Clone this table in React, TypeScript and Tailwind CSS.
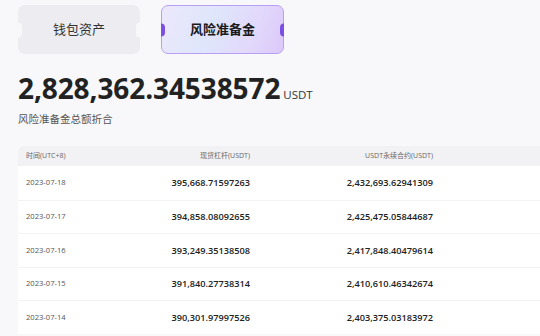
import React from "react";

const rows = [
  ["2023-07-18", "395,668.71597263", "2,432,693.62941309"],
  ["2023-07-17", "394,858.08092655", "2,425,475.05844687"],
  ["2023-07-16", "393,249.35138508", "2,417,848.40479614"],
  ["2023-07-15", "391,840.27738314", "2,410,610.46342674"],
  ["2023-07-14", "390,301.97997526", "2,403,375.03183972"],
];

const font = { fontFamily: '"Open Sans", "Noto Sans CJK SC", sans-serif' };

export default function App() {
  return (
    <div
      className="w-[540px] h-[336px] overflow-hidden bg-[#f8f8fb] relative"
      style={font}
    >
      <div className="flex gap-[21px] pl-[18px] pt-[5px]">
        <div className="relative w-[122px] h-[49px] rounded-[7px] bg-[#ededf1] flex items-center justify-center text-[13px] text-[#333]">
          <div className="absolute left-0 top-1/2 -translate-y-1/2 w-[4px] h-[15px] rounded-r-full bg-[#f8f8fb]" />
          <div className="absolute right-0 top-1/2 -translate-y-1/2 w-[4px] h-[15px] rounded-l-full bg-[#f8f8fb]" />
          钱包资产
        </div>
        <div className="relative w-[123px] h-[49px] rounded-[7px] border border-[#b7a0f2] bg-[linear-gradient(110deg,#ece8fb_0%,#dfe6fb_40%,#e2d8fb_75%,#dcc8fa_100%)] flex items-center justify-center text-[13px] font-bold text-[#1a1a1a]">
          <div className="absolute left-[-1px] top-1/2 -translate-y-1/2 w-[4px] h-[13px] rounded-r-full bg-[#7c4fe3]" />
          <div className="absolute right-[-1px] top-1/2 -translate-y-1/2 w-[4px] h-[13px] rounded-l-full bg-[#7c4fe3]" />
          风险准备金
        </div>
      </div>

      <div className="pl-[18px] mt-[18px] flex items-baseline">
        <span className="text-[28px] font-bold text-[#222] leading-[32px] tracking-[-0.1px]">
          2,828,362.34538572
        </span>
        <span className="ml-[3px] text-[11.5px] text-[#333]">USDT</span>
      </div>
      <div className="pl-[18px] mt-[8px] text-[10.5px] text-[#555] leading-[14px]">
        风险准备金总额折合
      </div>

      <div className="ml-[18px] mt-[20px] w-[600px]">
        <div className="h-[20px] rounded-t-[6px] bg-[#f2f2f5] flex items-center pl-[8px] text-[7px] text-[#666]">
          <div className="w-[120px]">时间(UTC+8)</div>
          <div className="w-[104px] text-right">现货杠杆(USDT)</div>
          <div className="w-[183px] text-right">USDT永续合约(USDT)</div>
        </div>
        {rows.map((r, i) => (
          <div
            key={i}
            className={`h-[33.6px] bg-white flex items-center pl-[8px] ${i > 0 ? "border-t border-[#f3f3f5]" : ""}`}
          >
            <div className="w-[120px] text-[7.6px] text-[#555]">{r[0]}</div>
            <div className="w-[104px] text-right text-[9.2px] font-semibold text-[#222]">
              {r[1]}
            </div>
            <div className="w-[183px] text-right text-[9.2px] font-semibold text-[#222]">
              {r[2]}
            </div>
          </div>
        ))}
      </div>
    </div>
  );
}
